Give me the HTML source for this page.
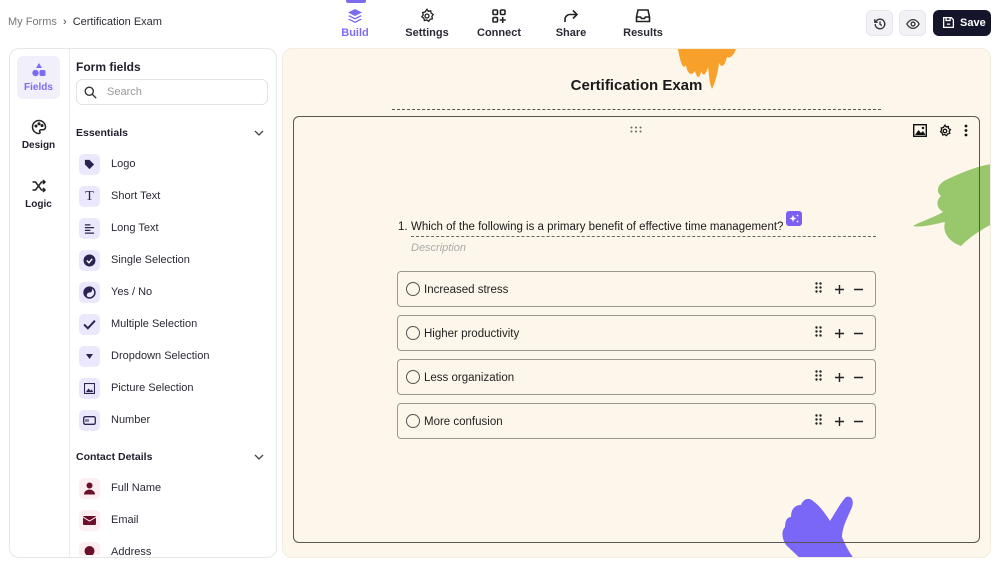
<!DOCTYPE html>
<html><head><meta charset="utf-8"><style>
*{box-sizing:border-box;margin:0;padding:0}
body{width:1000px;height:565px;overflow:hidden;background:#fff;font-family:"Liberation Sans",sans-serif;color:#1f1f2e;position:relative}
.a{position:absolute}
.nav{position:absolute;top:8px;width:70px;text-align:center;font-size:11px;font-weight:bold;color:#2a2a36}
.nav svg{display:block;margin:0 auto 3px}
.btn{position:absolute;top:10px;width:27px;height:26px;border-radius:6px;background:#f1f1f6;border:1px solid #e6e6ee}
.item{position:absolute;left:79px;font-size:11px;color:#2a2a36;height:21px;line-height:21px}
.item i{position:absolute;left:0;top:0;width:21px;height:21px;border-radius:5px;background:#ebe7fd}
.item span{position:absolute;left:32px;white-space:nowrap}
.item.c i{background:#fdeef2}
.opt{position:absolute;left:397px;width:479px;height:36px;border:1.5px solid #9c9890;border-radius:4px;font-size:11.5px;color:#222}
.opt .r{position:absolute;left:8px;top:10px;width:14px;height:14px;border:1.3px solid #555;border-radius:50%}
.opt .t{position:absolute;left:26px;top:10.5px;line-height:14px}
.opt svg{position:absolute;right:10px;top:10px}
</style></head><body>
<div class="a" style="left:8px;top:16px;font-size:11px;color:#777">My Forms <span style="margin:0 3px;color:#444">›</span> <span style="color:#2a2a36">Certification Exam</span></div>
<div class="a" style="left:346px;top:0;width:20px;height:3px;background:#7c6cf0;border-radius:0 0 2px 2px"></div>
<div class="nav" style="left:320px;color:#7c6cf0"><svg width="16" height="16" viewBox="0 0 16 16" fill="#7c6cf0"><path d="M8 1L15 4.5 8 8 1 4.5z"/><path d="M2.5 7.3L8 10 13.5 7.3 15 8 8 11.5 1 8z"/><path d="M2.5 10.8L8 13.5 13.5 10.8 15 11.5 8 15 1 11.5z"/></svg>Build</div>
<div class="nav" style="left:392px"><svg width="16" height="16" viewBox="0 0 24 24" fill="none" stroke="#222" stroke-width="2"><circle cx="12" cy="12" r="3"/><path d="M12 2l2 3 3.5-.8.8 3.5 3 2-2 3 .8 3.5-3.5.8-2 3-3-2-3.5.8-.8-3.5-3-2 2-3-.8-3.5 3.5-.8z"/></svg>Settings</div>
<div class="nav" style="left:464px"><svg width="16" height="16" viewBox="0 0 16 16" fill="none" stroke="#222" stroke-width="1.6"><rect x="2" y="2" width="4.5" height="4.5" rx="1"/><rect x="9.5" y="2" width="4.5" height="4.5" rx="1"/><rect x="2" y="9.5" width="4.5" height="4.5" rx="1"/><path d="M11.7 9v6M8.7 12h6"/></svg>Connect</div>
<div class="nav" style="left:536px"><svg width="16" height="16" viewBox="0 0 16 16" fill="none" stroke="#222" stroke-width="1.6"><path d="M10 2.5L14 6.5 10 10.5M14 6.5H7a5 5 0 0 0-5 5V14"/></svg>Share</div>
<div class="nav" style="left:608px"><svg width="16" height="16" viewBox="0 0 16 16" fill="none" stroke="#222" stroke-width="1.6"><path d="M3 2h10l1.5 7v4.5H1.5V9z"/><path d="M1.5 9h4l1 1.5h3l1-1.5h4"/></svg>Results</div>
<div class="btn" style="left:866px"><svg class="a" style="left:6px;top:6px" width="14" height="14" viewBox="0 0 16 16" fill="none" stroke="#333" stroke-width="1.5"><path d="M2.5 8a5.5 5.5 0 1 0 1.6-3.9L2 6M2 2.5V6h3.5M8 5v3.3l2 1.5"/></svg></div>
<div class="btn" style="left:899px"><svg class="a" style="left:6px;top:6px" width="14" height="14" viewBox="0 0 16 16" fill="none" stroke="#333" stroke-width="1.5"><path d="M1 8s2.5-5 7-5 7 5 7 5-2.5 5-7 5-7-5-7-5z"/><circle cx="8" cy="8" r="2.2"/></svg></div>
<div class="a" style="left:933px;top:10px;width:58px;height:26px;border-radius:6px;background:#14142b;color:#fff;font-size:11px;font-weight:bold;line-height:26px;padding-left:27px">Save<svg class="a" style="left:9px;top:6px" width="13" height="13" viewBox="0 0 16 16" fill="none" stroke="#fff" stroke-width="1.6"><path d="M2 2h9.5L14 4.5V14H2z"/><path d="M5 2v3.5h5V2M6 10h4"/></svg></div>

<div class="a" style="left:9px;top:48px;width:268px;height:510px;border:1px solid #e6e6e6;border-radius:10px;overflow:hidden;background:#fff">
 <div class="a" style="left:59px;top:0;width:1px;height:510px;background:#ececec"></div>
 <div class="a" style="left:7px;top:7px;width:43px;height:43px;border-radius:6px;background:#f1f0fa;text-align:center;font-size:10px;font-weight:bold;color:#7c6cf0;padding-top:6px"><svg width="16" height="16" viewBox="0 0 16 16" fill="#7c6cf0" style="display:block;margin:0 auto 4px"><path d="M8 1l3 5H5z"/><circle cx="4.5" cy="11" r="3.2"/><rect x="8.5" y="8" width="6" height="6" rx="1.5"/></svg>Fields</div>
 <div class="a" style="left:7px;top:70px;width:43px;text-align:center;font-size:10px;font-weight:bold"><svg width="16" height="16" viewBox="0 0 16 16" fill="none" stroke="#222" stroke-width="1.5" style="display:block;margin:0 auto 5px"><path d="M8 1.5a6.5 6.5 0 0 0 0 13c1.2 0 1.3-1 .8-1.8-.6-1 0-2 1.2-2h2a2.5 2.5 0 0 0 2.5-2.5C14.5 4.5 11.5 1.5 8 1.5z"/><circle cx="5" cy="7" r=".8"/><circle cx="8" cy="4.8" r=".8"/><circle cx="11" cy="6.5" r=".8"/></svg>Design</div>
 <div class="a" style="left:7px;top:129px;width:43px;text-align:center;font-size:10px;font-weight:bold"><svg width="16" height="16" viewBox="0 0 16 16" fill="none" stroke="#222" stroke-width="1.5" style="display:block;margin:0 auto 5px"><path d="M1.5 4h3l6 8h3.5M1.5 12h3l6-8h3.5M12 2l2 2-2 2M12 10l2 2-2 2"/></svg>Logic</div>
</div>
<div class="a" style="left:76px;top:60px;font-size:12px;font-weight:bold">Form fields</div>
<div class="a" style="left:76px;top:79px;width:192px;height:26px;border:1px solid #e3e3e3;border-radius:6px;font-size:11px;color:#999;line-height:24px;padding-left:30px">Search<svg class="a" style="left:7px;top:6px" width="13" height="13" viewBox="0 0 16 16" fill="none" stroke="#333" stroke-width="1.7"><circle cx="6.5" cy="6.5" r="5"/><path d="M10.3 10.3L15 15"/></svg></div>
<div class="a" style="left:76px;top:127px;font-size:10.5px;font-weight:bold">Essentials</div>
<svg class="a" style="left:254px;top:129px" width="10" height="8" viewBox="0 0 10 8" fill="none" stroke="#444" stroke-width="1.3"><path d="M1 2l4 4 4-4"/></svg>
<div class="item" style="top:154px"><i><svg class="a" style="left:5px;top:5px" width="11" height="11" viewBox="0 0 12 12" fill="#2a2450"><path d="M1 1h5l5 5-5 5-5-5z"/></svg></i><span>Logo</span></div>
<div class="item" style="top:186px"><i style="font-family:'Liberation Serif';font-size:14px;text-align:center;line-height:21px;font-style:normal;color:#2a2450">T</i><span>Short Text</span></div>
<div class="item" style="top:218px"><i><svg class="a" style="left:5px;top:5px" width="11" height="11" viewBox="0 0 12 12" stroke="#2a2450" stroke-width="1.4"><path d="M1 2h6M1 5h10M1 8h6M1 11h10"/></svg></i><span>Long Text</span></div>
<div class="item" style="top:250px"><i><svg class="a" style="left:4px;top:4px" width="13" height="13" viewBox="0 0 12 12"><circle cx="6" cy="6" r="5.5" fill="#2a2450"/><path d="M3.5 6l2 2 3-3.5" stroke="#fff" stroke-width="1.3" fill="none"/></svg></i><span>Single Selection</span></div>
<div class="item" style="top:282px"><i><svg class="a" style="left:4px;top:4px" width="13" height="13" viewBox="0 0 12 12"><circle cx="6" cy="6" r="5" fill="none" stroke="#2a2450" stroke-width="1.4"/><path d="M6 1a5 5 0 0 0 0 10 2.5 2.5 0 0 1 0-5 2.5 2.5 0 0 0 0-5z" fill="#2a2450"/></svg></i><span>Yes / No</span></div>
<div class="item" style="top:314px"><i><svg class="a" style="left:4px;top:5px" width="13" height="11" viewBox="0 0 12 10" fill="none" stroke="#2a2450" stroke-width="1.8"><path d="M1 5l3.5 3.5L11 1.5"/></svg></i><span>Multiple Selection</span></div>
<div class="item" style="top:346px"><i><svg class="a" style="left:7px;top:8px" width="7" height="5" viewBox="0 0 7 5" fill="#2a2450"><path d="M0 0h7L3.5 5z"/></svg></i><span>Dropdown Selection</span></div>
<div class="item" style="top:378px"><i><svg class="a" style="left:5px;top:5px" width="11" height="11" viewBox="0 0 12 12"><rect x=".5" y=".5" width="11" height="11" fill="none" stroke="#2a2450" stroke-width="1.3"/><path d="M2 10l3-4 2 2.5 1.5-1.5L10 10z" fill="#2a2450"/></svg></i><span>Picture Selection</span></div>
<div class="item" style="top:410px"><i><svg class="a" style="left:4px;top:6px" width="13" height="9" viewBox="0 0 13 9"><rect x=".7" y=".7" width="11.6" height="7.6" rx="1.5" fill="none" stroke="#2a2450" stroke-width="1.3"/><path d="M3 3v3M5 3v3" stroke="#2a2450"/></svg></i><span>Number</span></div>
<div class="a" style="left:76px;top:451px;font-size:10.5px;font-weight:bold">Contact Details</div>
<svg class="a" style="left:254px;top:453px" width="10" height="8" viewBox="0 0 10 8" fill="none" stroke="#444" stroke-width="1.3"><path d="M1 2l4 4 4-4"/></svg>
<div class="item c" style="top:478px"><i><svg class="a" style="left:5px;top:4px" width="11" height="13" viewBox="0 0 11 13" fill="#6b0f2a"><circle cx="5.5" cy="3.5" r="3"/><path d="M0 12.5a5.5 5 0 0 1 11 0z"/></svg></i><span>Full Name</span></div>
<div class="item c" style="top:510px"><i><svg class="a" style="left:4px;top:6px" width="13" height="9" viewBox="0 0 13 9" fill="#6b0f2a"><rect width="13" height="9" rx="1"/><path d="M0 1l6.5 4L13 1" stroke="#fdeef2" fill="none"/></svg></i><span>Email</span></div>
<div class="a" style="left:68px;top:542px;width:208px;height:13px;overflow:hidden"><div class="item c" style="top:0;left:11px"><i><svg class="a" style="left:5px;top:4px" width="11" height="12" viewBox="0 0 11 12" fill="#6b0f2a"><circle cx="5.5" cy="5" r="5"/></svg></i><span>Address</span></div></div>

<div class="a" style="left:282px;top:48px;width:709px;height:510px;background:#fdf6ea;border:1px solid #f3ece0;border-radius:10px;overflow:hidden">
 <svg class="a" style="left:395px;top:0" width="58" height="40" viewBox="0 0 58 40" fill="#f7a12a"><path d="M0 0h58c-2 6-6 10-9 8-2 8-5 12-8 6-1 10-4 20-7 26-3-6-3-16-4-22-2 8-5 10-7 4-1 8-4 8-6 0-4 6-8 2-9-6-2 4-5 2-8-16z"/></svg>
 <svg class="a" style="left:630px;top:115px" width="79" height="86" viewBox="0 0 79 86" fill="#98c76c"><path d="M79 0C65 2 50 8 35 15 25 19 22 27 28 32c-6 6-4 12 2 16-10 6-24 10-30 14 8 2 22-2 32-4-3 10 4 20 16 24 8-8 16-14 31-22z"/></svg>
 <svg class="a" style="left:498px;top:430px" width="82" height="82" viewBox="0 0 82 82" fill="#7b67f7"><path d="M22 82L5 66C1 60 0 52 4 48c0-6 2-10 6-10 0-8 4-12 10-12 2-6 8-8 12-4 6 4 12 12 17 20 6-10 12-20 16-24 6-2 8 4 6 10-4 10-10 20-10 30 4 10 10 20 14 24z"/></svg>
</div>
<div class="a" style="left:282px;top:77px;width:709px;text-align:center;font-size:15px;font-weight:bold;color:#1a1a1a">Certification Exam</div>
<div class="a" style="left:392px;top:109px;width:489px;border-top:1px dashed #555"></div>
<div class="a" style="left:293px;top:116px;width:687px;height:427px;border:1.5px solid #5a5650;border-radius:6px"></div>
<svg class="a" style="left:630px;top:126px" width="12" height="7" viewBox="0 0 12 7" fill="#666"><circle cx="1.5" cy="1.5" r="1"/><circle cx="6" cy="1.5" r="1"/><circle cx="10.5" cy="1.5" r="1"/><circle cx="1.5" cy="5.5" r="1"/><circle cx="6" cy="5.5" r="1"/><circle cx="10.5" cy="5.5" r="1"/></svg>
<svg class="a" style="left:913px;top:124px" width="14" height="13" viewBox="0 0 14 13"><rect x=".7" y=".7" width="12.6" height="11.6" fill="none" stroke="#111" stroke-width="1.4"/><path d="M2 11l3.5-5 2.5 3 2-2 2.5 4z" fill="#111"/><circle cx="10" cy="4" r="1.2" fill="#111"/></svg>
<svg class="a" style="left:938px;top:124px" width="14" height="14" viewBox="0 0 24 24" fill="none" stroke="#111" stroke-width="2.2"><circle cx="12" cy="12" r="3"/><path d="M12 2l2 3 3.5-.8.8 3.5 3 2-2 3 .8 3.5-3.5.8-2 3-3-2-3.5.8-.8-3.5-3-2 2-3-.8-3.5 3.5-.8z"/></svg>
<svg class="a" style="left:964px;top:124px" width="4" height="13" viewBox="0 0 4 13" fill="#111"><circle cx="2" cy="2" r="1.4"/><circle cx="2" cy="6.5" r="1.4"/><circle cx="2" cy="11" r="1.4"/></svg>
<div class="a" style="left:398px;top:221px;font-size:11.5px;color:#1a1a1a;white-space:nowrap">1.</div>
<div class="a" style="left:411px;top:221px;font-size:11.5px;color:#1a1a1a;white-space:nowrap">Which of the following is a primary benefit of effective time management?</div>
<div class="a" style="left:411px;top:236px;width:465px;border-top:1px dashed #666"></div>
<div class="a" style="left:786px;top:211px;width:16px;height:15px;background:#7b5ff0;border-radius:3px"><svg class="a" style="left:3px;top:3px" width="10" height="9" viewBox="0 0 10 9" fill="#fff"><path d="M4 1l1 2.5L7.5 4.5 5 5.5 4 8 3 5.5.5 4.5 3 3.5z"/><circle cx="8.5" cy="1.5" r=".9"/><circle cx="8.5" cy="7.5" r=".9"/></svg></div>
<div class="a" style="left:411px;top:242px;font-size:11px;font-style:italic;color:#aaa">Description</div>
<div class="opt" style="top:271px"><div class="r"></div><div class="t">Increased stress</div><svg width="50" height="14" viewBox="0 0 50 14"><g fill="#222"><circle cx="1.5" cy="1.5" r="1.2"/><circle cx="5.5" cy="1.5" r="1.2"/><circle cx="1.5" cy="5.5" r="1.2"/><circle cx="5.5" cy="5.5" r="1.2"/><circle cx="1.5" cy="9.5" r="1.2"/><circle cx="5.5" cy="9.5" r="1.2"/></g><path d="M20 7.5h9M24.5 3v9M39 7.5h9" stroke="#222" stroke-width="1.4"/></svg></div>
<div class="opt" style="top:315px"><div class="r"></div><div class="t">Higher productivity</div><svg width="50" height="14" viewBox="0 0 50 14"><g fill="#222"><circle cx="1.5" cy="1.5" r="1.2"/><circle cx="5.5" cy="1.5" r="1.2"/><circle cx="1.5" cy="5.5" r="1.2"/><circle cx="5.5" cy="5.5" r="1.2"/><circle cx="1.5" cy="9.5" r="1.2"/><circle cx="5.5" cy="9.5" r="1.2"/></g><path d="M20 7.5h9M24.5 3v9M39 7.5h9" stroke="#222" stroke-width="1.4"/></svg></div>
<div class="opt" style="top:359px"><div class="r"></div><div class="t">Less organization</div><svg width="50" height="14" viewBox="0 0 50 14"><g fill="#222"><circle cx="1.5" cy="1.5" r="1.2"/><circle cx="5.5" cy="1.5" r="1.2"/><circle cx="1.5" cy="5.5" r="1.2"/><circle cx="5.5" cy="5.5" r="1.2"/><circle cx="1.5" cy="9.5" r="1.2"/><circle cx="5.5" cy="9.5" r="1.2"/></g><path d="M20 7.5h9M24.5 3v9M39 7.5h9" stroke="#222" stroke-width="1.4"/></svg></div>
<div class="opt" style="top:403px"><div class="r"></div><div class="t">More confusion</div><svg width="50" height="14" viewBox="0 0 50 14"><g fill="#222"><circle cx="1.5" cy="1.5" r="1.2"/><circle cx="5.5" cy="1.5" r="1.2"/><circle cx="1.5" cy="5.5" r="1.2"/><circle cx="5.5" cy="5.5" r="1.2"/><circle cx="1.5" cy="9.5" r="1.2"/><circle cx="5.5" cy="9.5" r="1.2"/></g><path d="M20 7.5h9M24.5 3v9M39 7.5h9" stroke="#222" stroke-width="1.4"/></svg></div>
</body></html>
